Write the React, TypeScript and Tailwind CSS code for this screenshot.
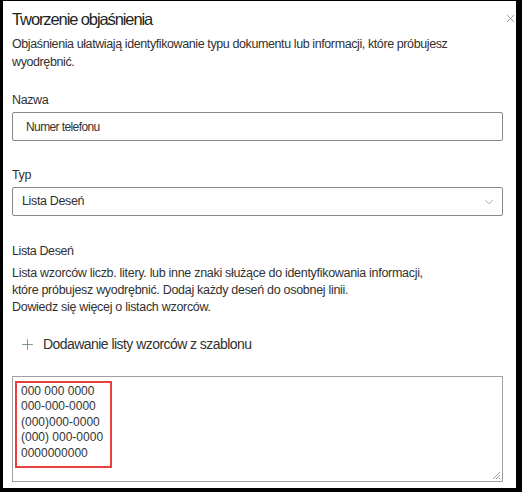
import { Plus, X, ChevronDown } from 'lucide-react'

const patterns = ['000 000 0000', '000-000-0000', '(000)000-0000', '(000) 000-0000', '0000000000']

function App() {
  return (
    <div
      className="w-[522px] h-[492px] overflow-hidden bg-white border-black border-t border-l-[3px] border-r-[6px] border-b-[4px] pl-[9px] pr-[13px] pt-[6px] text-[#323130]"
      style={{ fontFamily: '"Liberation Sans", Arial, sans-serif' }}
    >
      {/* Header */}
      <div className="flex items-start justify-between">
        <h1 className="text-[16.5px] leading-6 tracking-[-1.1px] text-[#201f1e]">Tworzenie objaśnienia</h1>
        <X className="w-[13px] h-[13px] mt-[5px] -mr-[14px] text-[#8a8886]" strokeWidth={1.5} />
      </div>
      <p className="mt-[4px] text-[12.5px] leading-[18px] tracking-[-0.4px]">
        Objaśnienia ułatwiają identyfikowanie typu dokumentu lub informacji, które próbujesz
        <br />
        wyodrębnić.
      </p>

      {/* Nazwa */}
      <div className="mt-[20px] text-[12.5px] leading-[18px] tracking-[-0.4px]">Nazwa</div>
      <div className="mt-[3px] h-[29px] flex items-center rounded-[2px] border border-[#8a8886] pl-[13px] text-[12px] tracking-[-0.6px]">
        Numer telefonu
      </div>

      {/* Typ */}
      <div className="mt-[25px] text-[12.5px] leading-[18px] tracking-[-0.4px]">Typ</div>
      <div className="mt-[3px] h-[29px] flex items-center justify-between rounded-[2px] border border-[#8a8886] pl-[9px] pr-[6px] text-[12.5px] tracking-[-0.35px]">
        <span>Lista Deseń</span>
        <ChevronDown className="w-[14px] h-[14px] text-[#8a8886]" strokeWidth={1.25} />
      </div>

      {/* Lista Deseń */}
      <div className="mt-[26px] text-[12.5px] leading-[18px] tracking-[-0.4px]">Lista Deseń</div>
      <p className="mt-[5px] text-[12.5px] leading-[17px] tracking-[-0.3px]">
        Lista wzorców liczb. litery. lub inne znaki służące do identyfikowania informacji,
        <br />
        które próbujesz wyodrębnić. Dodaj każdy deseń do osobnej linii.
        <br />
        Dowiedz się więcej o listach wzorców.
      </p>

      <div className="mt-[18px] h-5 flex items-center gap-[7px] pl-[7px] text-[14px] tracking-[-0.55px]">
        <Plus className="w-[17px] h-[17px] text-[#6f8f6f]" strokeWidth={1.25} />
        <span>Dodawanie listy wzorców z szablonu</span>
      </div>

      {/* Pattern list */}
      <div className="relative mt-[22px] h-[106px] border border-[#a0a0a0] pl-[2px] pt-[4px]">
        <div className="w-[97px] border-2 border-[#e8403f] pl-[4px] pt-[1px] pb-[5px] text-[12px] leading-[15.4px] text-[#333333]">
          {patterns.map(p => (
            <div key={p}>{p}</div>
          ))}
        </div>
        <svg className="absolute right-[1px] bottom-[1px]" width="10" height="10" viewBox="0 0 10 10">
          <line x1="9" y1="2" x2="2" y2="9" stroke="#a0a0a0" strokeWidth="1" />
          <line x1="9" y1="5" x2="5" y2="9" stroke="#a0a0a0" strokeWidth="1" />
          <line x1="9" y1="8" x2="8" y2="9" stroke="#a0a0a0" strokeWidth="1" />
        </svg>
      </div>
    </div>
  )
}

export default App
